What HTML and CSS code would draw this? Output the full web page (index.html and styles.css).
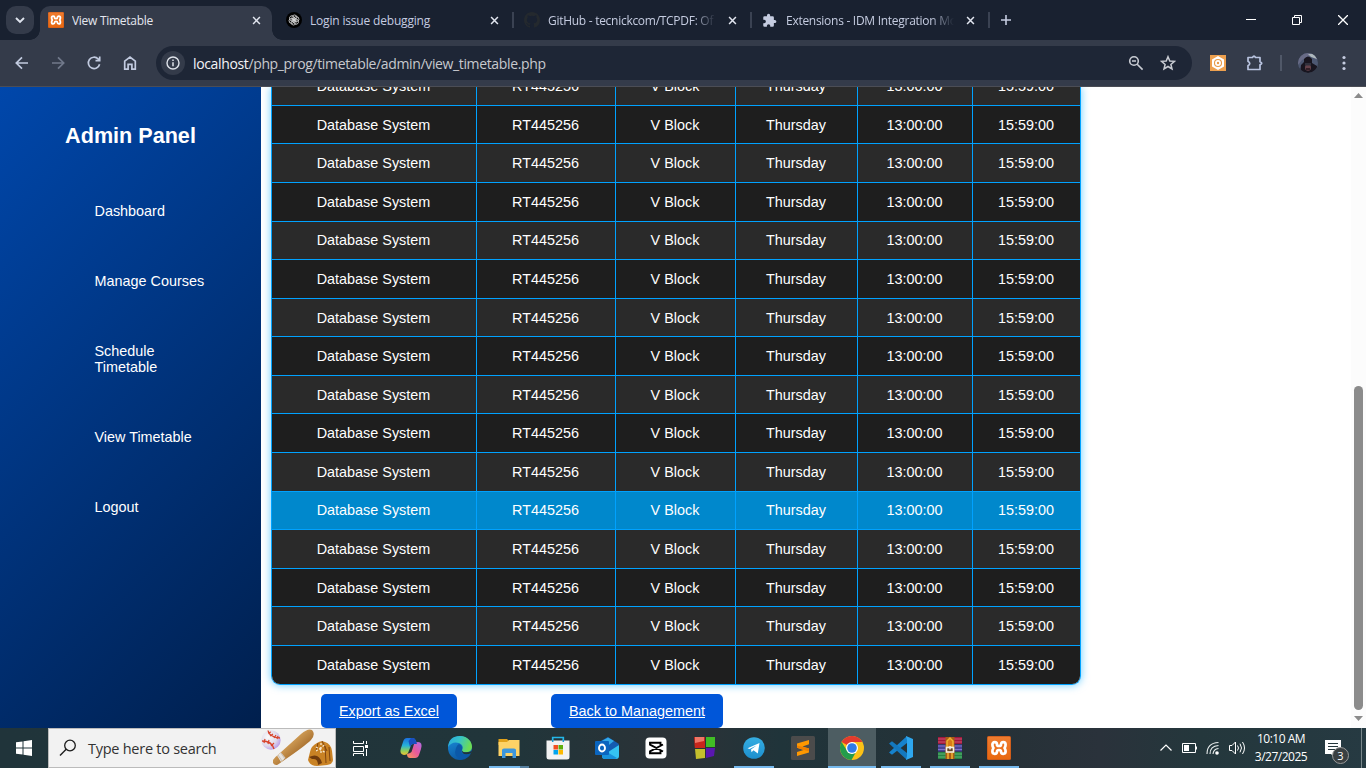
FILE: index.html
```
<!DOCTYPE html>
<html lang="en">
<head>
<meta charset="utf-8">
<title>View Timetable</title>
<link rel="stylesheet" href="styles.css">
</head>
<body>
<svg class="defs" width="0" height="0">
  <defs>
    <linearGradient id="orange" x1="0" y1="0" x2="0" y2="1"><stop offset="0" stop-color="#ee7c30"/><stop offset="1" stop-color="#e9680f"/></linearGradient>
    <linearGradient id="edgeA" x1="0" y1="0" x2="1" y2="0.3"><stop offset="0" stop-color="#2aa9e0"/><stop offset=".5" stop-color="#36c3c8"/><stop offset="1" stop-color="#6bdc55"/></linearGradient>
    <linearGradient id="edgeB" x1="0" y1="0" x2="0.4" y2="1"><stop offset="0" stop-color="#1b8fdd"/><stop offset="1" stop-color="#0c59a4"/></linearGradient>
    <linearGradient id="copA" x1="0" y1="0" x2="0" y2="1"><stop offset="0" stop-color="#1b6fe0"/><stop offset=".45" stop-color="#27b2d8"/><stop offset=".75" stop-color="#8ccf5c"/><stop offset="1" stop-color="#f4c331"/></linearGradient>
    <linearGradient id="copB" x1="1" y1="0" x2="0" y2="1"><stop offset="0" stop-color="#b26be8"/><stop offset=".5" stop-color="#e8599b"/><stop offset="1" stop-color="#fb9a55"/></linearGradient>
    <linearGradient id="bat" x1="0" y1="0" x2="1" y2="1"><stop offset=".3" stop-color="#dcaa62"/><stop offset=".65" stop-color="#a8702f"/></linearGradient>
    <radialGradient id="ball" cx=".35" cy=".35" r=".75"><stop offset="0" stop-color="#fafafa"/><stop offset=".6" stop-color="#ded9ea"/><stop offset="1" stop-color="#b291ea"/></radialGradient>
    <linearGradient id="tele" x1="0" y1="0" x2="0" y2="1"><stop offset="0" stop-color="#35aee2"/><stop offset="1" stop-color="#1d8fce"/></linearGradient>
    <symbol id="xampp" viewBox="0 0 24 24"><rect width="24" height="24" rx="1.500" fill="#c9591b"/><rect x=".8" y=".8" width="22.400" height="22.400" rx="1" fill="url(#orange)"/><path d="M10 9.800V8.500Q10 6.200 7.700 6.200T5.400 8.700Q5.400 10.500 6.500 12Q5.400 13.500 5.400 15.300Q5.400 17.800 7.700 17.800T10 15.500Q10 14 12 14T14 15.500Q14 17.800 16.300 17.800T18.600 15.300Q18.600 13.500 17.500 12Q18.600 10.500 18.600 8.700Q18.600 6.200 16.300 6.200T14 8.500Q14 10 12 10T10 8.500" fill="none" stroke="#fff" stroke-width="2.700" stroke-linejoin="round"/></symbol>
    <symbol id="x" viewBox="0 0 10 10"><path d="M1.200 1.200 8.800 8.800M8.800 1.200 1.200 8.800" stroke="currentColor" stroke-width="1.700"/></symbol>
    <symbol id="puzzle" viewBox="0 0 24 24"><path d="M20.500 11H19V7a2 2 0 0 0-2-2h-4V3.500a2.500 2.500 0 0 0-5 0V5H4a2 2 0 0 0-2 2v3.800h1.500a2.700 2.700 0 0 1 0 5.400H2V20a2 2 0 0 0 2 2h3.800v-1.500a2.700 2.700 0 0 1 5.400 0V22H17a2 2 0 0 0 2-2v-4h1.500a2.500 2.500 0 0 0 0-5z" fill="currentColor"/></symbol>
  </defs>
</svg>
<div class="screen">
  <header class="tabstrip">
    <div class="tab-search"><svg width="10" height="7" viewBox="0 0 10 7"><path d="M1 1 5 5 9 1" fill="none" stroke="#dfe4ee" stroke-width="1.900"/></svg></div>
    <div class="tab active">
      <svg class="fav"><use href="#xampp"/></svg><span class="name">View Timetable</span><svg class="close"><use href="#x"/></svg>
    </div>
    <div class="tab">
      <svg class="fav" viewBox="0 0 16 16"><circle cx="8" cy="8" r="8" fill="#000"/><g fill="none" stroke="#d8d8d8" stroke-width=".8"><path id="petal" d="M6 4.500Q8 1.700 10.300 3.600Q11.200 4.500 10.800 6.200L8 8 6 9.100Z"/><use href="#petal" transform="rotate(60 8 8)"/><use href="#petal" transform="rotate(120 8 8)"/><use href="#petal" transform="rotate(180 8 8)"/><use href="#petal" transform="rotate(240 8 8)"/><use href="#petal" transform="rotate(300 8 8)"/></g></svg><span class="name t2">Login issue debugging</span><svg class="close"><use href="#x"/></svg><i class="sep"></i>
    </div>
    <div class="tab">
      <svg class="fav" viewBox="0 0 16 16"><path fill="#24292e" d="M8 0C3.580 0 0 3.580 0 8c0 3.540 2.290 6.530 5.470 7.590.4.070.55-.17.55-.38v-1.490c-2.230.49-2.690-.94-2.690-.94-.36-.93-.89-1.170-.89-1.170-.73-.5.050-.49.050-.49.8.060 1.230.83 1.230.83.720 1.210 1.870.87 2.330.66.070-.52.280-.87.510-1.070-1.780-.2-3.640-.89-3.640-3.950 0-.87.310-1.590.82-2.150-.08-.2-.36-1.020.08-2.120 0 0 .67-.21 2.200.82a7.600 7.600 0 0 1 4 0c1.530-1.040 2.200-.82 2.200-.82.440 1.100.160 1.920.080 2.120.510.560.820 1.270.820 2.150 0 3.070-1.870 3.750-3.650 3.950.290.250.540.730.540 1.480v2.190c0 .210.150.460.550.380A8 8 0 0 0 16 8c0-4.420-3.580-8-8-8z"/></svg><span class="name fade t3">GitHub - tecnickcom/TCPDF: Of</span><svg class="close"><use href="#x"/></svg><i class="sep"></i>
    </div>
    <div class="tab">
      <svg class="fav puz"><use href="#puzzle"/></svg><span class="name fade t4">Extensions - IDM Integration Mo</span><svg class="close"><use href="#x"/></svg><i class="sep"></i>
    </div>
    <svg class="plus" width="12" height="12" viewBox="0 0 12 12"><path d="M6 1V11M1 6H11" stroke="#c5cce0" stroke-width="1.600"/></svg>
    <div class="winbtns">
      <svg width="10" height="10"><path d="M0 4.500H10" stroke="#fff"/></svg>
      <svg width="10" height="10"><path d="M.5 2.500H7.500V9.500H.5ZM2.500 2.500V.5H9.500V7.500H7.500" fill="none" stroke="#fff"/></svg>
      <svg width="10" height="10"><path d="M0 0 10 10M10 0 0 10" stroke="#fff" stroke-width="1.300"/></svg>
    </div>
  </header>
  <nav class="toolbar">
    <div class="navicons">
      <svg viewBox="0 0 16 16"><path d="M14 8H2.500M8 2.300 2.300 8 8 13.700" /></svg>
      <svg class="dim" viewBox="0 0 16 16"><path d="M2 8H13.500M8 2.300 13.700 8 8 13.700"/></svg>
      <svg viewBox="0 0 16 16"><path d="M13.600 9.300A5.700 5.700 0 1 1 12.200 4L13.500 5.400M13.700 1.500V5.600H9.500"/></svg>
      <svg viewBox="0 0 16 16"><path d="M2.700 6.200 8 2 13.300 6.200V14.200H9.900V9.300H6.100V14.200H2.700Z"/></svg>
    </div>
    <div class="omnibox">
      <span class="info"><svg width="14" height="14" viewBox="0 0 14 14"><circle cx="7" cy="7" r="6" fill="none" stroke="#dfe3ea" stroke-width="1.400"/><path d="M7 6.200V10.300M7 3.500V5" stroke="#dfe3ea" stroke-width="1.500"/></svg></span>
      <span class="url"><b>localhost</b>/php_prog/timetable/admin/view_timetable.php</span>
      <svg width="16" height="16" viewBox="0 0 16 16"><g fill="none" stroke="#c9ccd3" stroke-width="1.600"><circle cx="6" cy="6" r="4.300"/><path d="M9.200 9.200 14.600 14.600M4 6H8"/></g></svg>
      <svg width="16" height="16" viewBox="0 0 16 16"><path d="M8 1.700 9.800 6 14.500 6.300 10.900 9.400 12 14 8 11.500 4 14 5.100 9.400 1.500 6.300 6.200 6Z" fill="none" stroke="#c9ccd3" stroke-width="1.500"/></svg>
    </div>
    <svg class="idm" width="16" height="16" viewBox="0 0 16 16"><rect width="16" height="16" fill="#eda04f"/><path d="M8 1 14 4.500V11.500L8 15 2 11.500V4.500Z" fill="#fff"/><circle cx="8" cy="8" r="3.500" fill="none" stroke="#e89a48" stroke-width="1.100"/><circle cx="8" cy="8" r="1.200" fill="#e89a48"/></svg>
    <svg class="ext" width="18" height="18" viewBox="0 0 18 18"><path d="M2 3.500H6.500Q8 .8 9.500 3.500H14V7.800Q17.500 9.200 14 10.800V15.500H2V11.800Q5.500 9.500 2 7.200Z" fill="none" stroke="#b9c4e0" stroke-width="1.700" stroke-linejoin="round"/></svg>
    <i class="tdiv"></i>
    <svg class="avatar" width="20" height="20" viewBox="0 0 20 20"><defs><clipPath id="round"><circle cx="10" cy="10" r="10"/></clipPath></defs><g clip-path="url(#round)"><rect width="20" height="20" fill="#4d5872"/><path d="M0 0H20V7L12 3 4 7 0 12Z" fill="#686b86"/><path d="M10 1H16L19 6 13 4Z" fill="#aeb8bc"/><path d="M2 20 3 12 6 9V6Q10 1 14 6V10L19 13V20Z" fill="#18151f"/><ellipse cx="10" cy="14.500" rx="3" ry="3.200" fill="#65424b"/><path d="M7 10H13V12.500H7Z" fill="#30303c"/><path d="M8 16H12" stroke="#20151b" stroke-width="1.300"/></g></svg>
    <svg class="kebab" width="4" height="16"><g fill="#c5cce0"><circle cx="2" cy="2.500" r="1.600"/><circle cx="2" cy="8" r="1.600"/><circle cx="2" cy="13.500" r="1.600"/></g></svg>
  </nav>
  <div class="page">
    <aside class="sidebar">
      <h2>Admin Panel</h2>
      <ul>
        <li>Dashboard</li><li>Manage Courses</li><li>Schedule<br>Timetable</li><li>View Timetable</li><li>Logout</li>
      </ul>
    </aside>
    <main class="content">
      <div class="table" id="timetable"></div>
      <div class="actions"><a class="btn export">Export as Excel</a><a class="btn back">Back to Management</a></div>
    </main>
    <div class="scrollbar">
      <svg width="9" height="5"><path d="M0 5 4.500 0 9 5Z" fill="#8b8b8b"/></svg>
      <i class="thumb"></i>
      <svg width="9" height="5"><path d="M0 0 4.500 5 9 0Z" fill="#8b8b8b"/></svg>
    </div>
  </div>
  <footer class="taskbar">
    <div class="start"><svg width="16" height="16" viewBox="0 0 16 16"><path d="M0 2.300 6.500 1.400V7.500H0ZM7.500 1.200 16 0V7.500H7.500ZM0 8.500H6.500V14.600L0 13.700ZM7.500 8.500H16V16L7.500 14.800Z" fill="#fff"/></svg></div>
    <div class="search">
      <svg width="18" height="18" viewBox="0 0 18 18"><circle cx="11" cy="6.500" r="5.300" fill="none" stroke="#1c1c1c" stroke-width="1.300"/><path d="M7.200 10.300 1 16.500" stroke="#1c1c1c" stroke-width="1.400"/></svg>
      <span>Type here to search</span>
      <svg class="sport" width="74" height="38" viewBox="0 0 74 38"><circle cx="10" cy="11" r="9.700" fill="url(#ball)"/><path d="M7 1.500Q8 8 19 9M1 12Q11 12 13 20" fill="none" stroke="#d8432b" stroke-width="1.300"/><path d="M7 4 10 3M9 7 12 5M13 9 15 6M16 10 17 7M3 14 4 10M7 15 8 11M10 17 13 14" stroke="#d8432b" stroke-width="1.200"/><path d="M12 31Q14 28 19 24L40 5Q47-1 51 1Q55 5 50 11Q44 17 22 32L17 35.500Q14 37 12 34Z" fill="url(#bat)"/><path d="M16 26.500 20 23.500 24.500 29 20 33Z" fill="#e8e3dc"/><path d="M17 26 21 32M20 24 24 30" stroke="#aaa39c" stroke-width=".6"/><path d="M47 31 49 23Q50 17 56 14Q60 11 64 13Q70 15 71 22L72 31Q72 35 66 36L56 37Q49 37 47 31Z" fill="#c98224"/><path d="M48 28Q58 23 61 34L57 36Q57 29 51 30Z" fill="#713b0c"/><path d="M64 17 65 34M68 18 69 32M57 14 55 22M61 12 66 22" stroke="#80450f" stroke-width="1" fill="none"/><path d="M55 22 65 15M55 18 65 24M60 14V25" stroke="#f8ead2" stroke-width="1.300" stroke-dasharray="2 2"/></svg>
    </div>
    <div class="app view"><svg width="17" height="17" viewBox="0 0 17 17"><path d="M1.500 1V3.500H11.500V1M1.500 16V13.500H11.500V16M1.500 6.500H11.500V11.500H1.500ZM14.500 1V4M14.500 9V16" fill="none" stroke="#fff"/><rect x="13" y="5" width="3" height="3" fill="#fff"/></svg></div>
    <div class="app"><svg viewBox="0 0 24 24"><path d="M8 2H14Q16 2 17 5L18 8H14Q12 8 11 12L9 17Q8 19 5 19Q0 18 2 12L4 6Q5 2 8 2Z" fill="url(#copA)"/><path d="M16 22H11Q8 22 8 18L11 17Q13 16 13.500 13L15 8Q16 6 19 6Q24 6 22 13L20 19Q19 22 16 22Z" fill="url(#copB)"/><path d="M12 2H14Q16 2 17 5L18 8H14Q12 8 11 11L9.500 5Z" fill="#194fc0"/></svg></div>
    <div class="app"><svg viewBox="0 0 24 24"><circle cx="12" cy="12" r="12" fill="url(#edgeB)"/><path d="M0 11Q1 0 12 0C20 0 24 6 24 11C24 16 18 17 15 16Q13 15 14.300 13.500Q16 9 11 7Q4 5 0 11Z" fill="url(#edgeA)"/><path d="M14 13.500Q12 18 17 19Q20 20 22.500 18Q19 24 12 23Q5 20 8 12Q9 9 11 8Q15 10 14 13.500Z" fill="#0b58a8"/><path d="M14 14.500Q14 18 18 18.300Q21 18.300 23 17L24 15Q20 17 15.500 16Z" fill="#21343a"/></svg></div>
    <div class="app run multi"><svg viewBox="0 0 24 24"><path d="M1.500 3H10L12 5V9H1.500Z" fill="#e2a21a"/><path d="M1.500 6H10L12 4H22.500V20H1.500Z" fill="#fdd266"/><path d="M5 22V14Q5 12.500 7 12.500H17Q19 12.500 19 14V22H15.500V17H8.500V22Z" fill="#3c96dc"/></svg></div>
    <div class="app"><svg viewBox="0 0 24 24"><path d="M6.700 6V1.500H17.300V6" fill="none" stroke="#24b6e8" stroke-width="1.700"/><path d="M.5 4.500H23.500V21Q23.500 23.500 21 23.500H3Q.5 23.500 .5 21Z" fill="#f2f2f2"/><path d="M6.700 4V6M17.300 4V6" fill="none" stroke="#1697ce" stroke-width="1.500"/><path d="M7.500 9H12V13.500H7.500Z" fill="#f25022"/><path d="M12.500 9H17V13.500H12.500Z" fill="#5fae0a"/><path d="M7.500 14H12V18.500H7.500Z" fill="#00a4ef"/><path d="M12.500 14H17V18.500H12.500Z" fill="#fdb900"/></svg></div>
    <div class="app"><svg viewBox="0 0 24 24"><path d="M2 7 13 1 24 8 20 18H5Z" fill="#145cb1"/><path d="M5 6 13 1.500 19 5 10 12Z" fill="#32a9e8"/><path d="M24 9V20Q24 23 21 23H10Q7 23 7 20Z" fill="#35c4f1"/><path d="M7 13 22 22Q21 23 19 23H10Q7 23 7 20Z" fill="#1892dc"/><rect y="5" width="14" height="14" rx="1" fill="#0b65bf"/><ellipse cx="7" cy="12" rx="3" ry="3.500" fill="none" stroke="#fff" stroke-width="1.900"/></svg></div>
    <div class="app"><svg viewBox="0 0 24 24"><rect x="1.500" y="1.500" width="21" height="21" rx="4" fill="#fff"/><path d="M19 8.500 6 15.300V17.200H16.500V15M19 15.500 6 8.700V6.800H16.500V9" fill="none" stroke="#000" stroke-width="1.900"/></svg></div>
    <div class="app"><svg viewBox="0 0 24 24"><path d="M1 1H12V12H1.800Z" fill="#c9261b"/><path d="M2 1H11V5L2 7Z" fill="#ef7767"/><path d="M13 1H22V11H13Z" fill="#41bd25"/><path d="M2 13H12V22L3 23Z" fill="#c5bf2d"/><path d="M13 12H22L21 20 13 22Z" fill="#5a17b0"/></svg></div>
    <div class="app run"><svg viewBox="0 0 24 24"><circle cx="12" cy="12" r="10.800" fill="url(#tele)"/><path d="M5.500 12.300 17.500 7 15.800 17.500 11.500 14.200 9.500 16.200 9 13.400 14.500 9.500 7.500 13Z" fill="#fff"/></svg></div>
    <div class="app"><svg viewBox="0 0 24 24"><rect width="24" height="24" rx="1.500" fill="#4b4b4b"/><path d="M18 4V8.300L11.500 10.400 18 12.500V16.500L6 20V16L12.500 13.900 6 11.800V7.600Z" fill="#ff9800"/><path d="M6 9.500V11.800L18 15.500V12.500Z" fill="#f08000"/></svg></div>
    <div class="app run current"><svg viewBox="0 0 24 24"><circle cx="12" cy="12" r="12" fill="#fbc116"/><path d="M1.600 6A12 12 0 0 1 22.400 6H12L7 9Z" fill="#e33b2e"/><path d="M1.600 6 7.200 15 12 18 16.500 15 11.500 24A12 12 0 0 1 1.600 6Z" fill="#249c4b"/><circle cx="12" cy="12" r="6" fill="#fff"/><circle cx="12" cy="12" r="4.800" fill="#307be8"/></svg></div>
    <div class="app run"><svg viewBox="0 0 24 24"><path d="M0 16.500 18 0V7L3 18.800Z" fill="#1682cd"/><path d="M0 7.500 3 5.200 18 17V24Z" fill="#1478be"/><path d="M17 0 24 3V21L17 24 18 20V4Z" fill="#2ea7ef"/></svg></div>
    <div class="app run"><svg viewBox="0 0 24 24"><path d="M0 1H24V8H0Z" fill="#9f183c"/><path d="M0 8.500H24V15.500H0Z" fill="#494396"/><path d="M0 16H24V23H0Z" fill="#258244"/><path d="M0 3H24M0 6H24" stroke="#dc6680" stroke-width=".8"/><path d="M0 10H24M0 13.500H24" stroke="#8d83d8" stroke-width=".8"/><path d="M0 18H24M0 21H24" stroke="#6fc486" stroke-width=".8"/><rect x="7.500" y="1" width="9" height="22" fill="#a95c15"/><path d="M9 5V11H15V5L12 2ZM10 17V23M14 17V23" fill="#d87b17" stroke="#efb232" stroke-width="1.500"/><rect x="8.500" y="11.500" width="7" height="4.500" fill="#684421" stroke="#f6f0df" stroke-width="1.600"/><path d="M12 10V13.500" stroke="#eee" stroke-width="1.500"/></svg></div>
    <div class="app run"><svg><use href="#xampp"/></svg></div>
    <div class="tray">
      <svg width="14" height="14" viewBox="0 0 14 14"><path d="M1.500 9.500 7 4 12.500 9.500" fill="none" stroke="#fff" stroke-width="1.200"/></svg>
      <svg width="15" height="10" viewBox="0 0 15 10"><path d="M.5.5H13.500V9.500H.5ZM14.500 3.500V6.500" fill="none" stroke="#fff"/><rect x="2" y="2" width="5" height="6" fill="#fff"/></svg>
      <svg width="14" height="14" viewBox="0 0 14 14"><g fill="none" stroke="#e8eded" stroke-width="1.100"><path d="M1 13Q1 2 12.500 1.500M4 13Q4 5 12.500 4.500M7 13Q7.500 8 12.500 7.500"/></g><circle cx="11" cy="12" r="1.800" fill="#fff"/></svg>
      <svg width="17" height="14" viewBox="0 0 17 14"><path d="M.5 4.500H3L6.500 1V13L3 9.500H.5ZM8.500 4.500Q10.500 7 8.500 9.500M11 2.700Q14 7 11 11.300M13.500 1Q17.500 7 13.500 13" fill="none" stroke="#fff"/></svg>
    </div>
    <div class="clock"><span>10:10 AM</span><span>3/27/2025</span></div>
    <div class="notif"><svg width="25" height="25" viewBox="0 0 25 25"><path d="M0 0H16V14H9V17L6 14H0Z" fill="#fff"/><path d="M3 3.500H13M3 6.500H13M3 9.500H10" stroke="#26373c"/><circle cx="15.500" cy="15.500" r="8" fill="#3a4042" stroke="#999"/><text x="15.500" y="19.500">3</text></svg></div>
    <i class="desktop-edge"></i>
  </footer>
</div>
<script src="table.js"></script>
</body>
</html>
```
FILE: table.js
```
const entry = ["Database System", "RT445256", "V Block", "Thursday", "13:00:00", "15:59:00"];
const heights = [38, 38, 39, 39, 38, 39, 38, 39, 38, 39, 39, 38, 39, 38, 39, 39];
const raised = [0, 4, 11];
const hovered = 11;
const table = document.getElementById("timetable");
heights.forEach((height, i) => {
  const row = document.createElement("div");
  row.className = "row" + (i === hovered ? " hovered" : "") + (raised.includes(i) ? " raised" : "");
  row.style.height = height + "px";
  entry.forEach((text) => {
    const cell = document.createElement("span");
    cell.textContent = text;
    row.appendChild(cell);
  });
  table.appendChild(row);
});
```
FILE: styles.css
```
* { box-sizing: border-box; }
body { margin: 0; overflow: hidden; font-family: "Liberation Sans", Arial, sans-serif; }
svg { display: block; flex: none; }
.defs { position: absolute; }
.screen { width: 1366px; height: 768px; display: flex; flex-direction: column; background: #fff; }

.tabstrip { height: 40px; flex: none; background: #192130; display: flex; align-items: flex-start; font-family: "Open Sans", sans-serif; font-size: 12px; color: #c5cce0; }
.tab-search { width: 28px; height: 28px; margin: 6px 6px 0; border-radius: 10px; background: #343b4a; display: grid; place-items: center; }
.tab { position: relative; width: 238px; height: 40px; display: flex; align-items: center; padding-left: 8px; flex: none; }
.tab.active { color: #e4e7ef; }
.tab.active::before { content: ""; position: absolute; left: 0; top: 6px; width: 232px; height: 34px; background: #343b4a; border-radius: 10px 10px 0 0; }
.tab.active::after { content: ""; position: absolute; left: -10px; bottom: 0; width: 252px; height: 10px; background: radial-gradient(circle at 0 0, transparent 9.500px, #343b4a 10px) left / 10px 10px no-repeat, radial-gradient(circle at 100% 0, transparent 9.500px, #343b4a 10px) right / 10px 10px no-repeat; }
.fav { width: 16px; height: 16px; margin-right: 8px; position: relative; z-index: 1; }
.puz { width: 15px; height: 15px; margin-right: 9px; }
.name { width: 168px; white-space: nowrap; overflow: hidden; line-height: 20px; padding-top: 1px; position: relative; z-index: 1; letter-spacing: -.28px; }
.t2 { letter-spacing: -.18px; }
.fade { mask-image: linear-gradient(90deg, #000 86%, transparent); }
.close { width: 9px; height: 9px; margin-left: 12px; position: relative; z-index: 1; color: #e1e5ef; }
.sep { position: absolute; left: 234px; top: 12px; width: 2px; height: 16px; background: #3a4252; }
.plus { margin: 14px 0 0 8px; }
.winbtns { margin: 15px 18px 0 auto; display: flex; gap: 36px; }

.toolbar { height: 47px; flex: none; background: #343b4a; border-bottom: 1px solid #4b4d55; display: flex; align-items: center; padding-left: 14px; }
.navicons { display: flex; gap: 20px; }
.navicons svg { width: 16px; height: 16px; fill: none; stroke: #c2cbe0; stroke-width: 1.700; }
.navicons .dim { stroke: #71798b; }
.omnibox { width: 1036px; height: 34px; margin-left: 18px; border-radius: 17px; background: #1e2636; display: flex; align-items: center; padding: 0 16px 0 5px; gap: 16px; }
.info { width: 24px; height: 24px; border-radius: 50%; background: #343b4a; display: grid; place-items: center; }
.url { flex: 1; margin-left: -8px; font: 14px "Open Sans", sans-serif; color: #c7c9ce; letter-spacing: -.36px; white-space: nowrap; }
.url b { font-weight: 400; color: #f3f4f6; }
.idm { margin-left: 18px; }
.ext { margin-left: 20px; }
.tdiv { width: 2px; height: 16px; margin-left: 16px; background: #505868; }
.avatar { margin-left: 16px; }
.kebab { margin-left: 24px; }

.page { height: 641px; flex: none; display: flex; overflow: hidden; }
.sidebar { width: 261px; color: #fff; background: linear-gradient(135deg, #0047ab, #001f4d); }
.sidebar h2 { margin: 36px 0 0; font-size: 21.600px; line-height: 25px; text-align: center; }
.sidebar ul { list-style: none; margin: 55px 0 0; padding: 0 0 0 94.500px; display: flex; flex-direction: column; gap: 54px; }
.sidebar li { font-size: 14.400px; line-height: 16px; }
.content { flex: 1; padding-left: 10px; min-width: 0; }
.table { width: 810px; height: 598px; display: flex; flex-direction: column; justify-content: flex-end; overflow: hidden; border: solid #00a2ff; border-width: 0 1px 1px; border-radius: 0 0 9px 9px; box-shadow: 0 0 9px rgba(0, 170, 255, .6); }
.row { flex: none; display: grid; grid-template-columns: 205px 139px 120px 122px 115px 107px; background: #2a2a2a; border-top: 1px solid #00a2ff; color: #fff; font-size: 14.400px; line-height: 18px; }
.row:nth-child(even) { background: #1e1e1e; }
.row.hovered { background: #0088cc; }
.row span { text-align: center; border-right: 1px solid #00a2ff; padding: 10px 1px 0 0; }
.row.raised span { padding-top: 9px; }
.row span:last-child { border-right: 0; }
.actions { display: flex; gap: 94px; margin: 9px 0 0 50px; }
.btn { height: 34px; border-radius: 5px; background: #0056d9; color: #fff; font-size: 14.400px; line-height: 34px; text-align: center; text-decoration: underline; }
.export { width: 136px; }
.back { width: 172px; }
.scrollbar { width: 15px; background: #fcfcfc; display: flex; flex-direction: column; align-items: center; padding: 6px 0 7px; }
.thumb { width: 9px; height: 324px; margin: auto 0 6px; border-radius: 5px; background: #8b8b8b; }

.taskbar { height: 40px; flex: none; display: flex; background: linear-gradient(90deg, #20343a 0, #21353a 520px, #2c3237 680px, #20343a 780px, #263137 1000px, #2a323b 1100px, #24373c 1200px, #263a42); }
.start { width: 48px; display: grid; place-items: center; }
.search { width: 288px; background: #f2f2f2; border: 1px solid #bbb; display: flex; align-items: center; padding-left: 10px; font: 14.500px "Open Sans", sans-serif; color: #333; }
.search span { margin-left: 11px; width: 173px; letter-spacing: -.26px; white-space: nowrap; }
.app { width: 48px; margin-right: 1px; position: relative; display: grid; place-items: center; flex: none; }
.app svg { width: 24px; height: 24px; }
.view { margin-right: 3px; }
.view svg { width: 17px; height: 17px; }
.run::after { content: ""; position: absolute; left: 4px; bottom: 0; width: 40px; height: 2px; background: #76b9ed; }
.multi::after { background: linear-gradient(90deg, #76b9ed 31px, #557f9f 31px); }
.current { background: #4d5d62; }
.current::after { left: 0; width: 48px; }
.tray { display: flex; align-items: center; margin-left: auto; gap: 9px; }
.clock { width: 66px; margin-left: 2px; padding-top: 2px; display: flex; flex-direction: column; align-items: center; color: #fff; font: 12px/18px "Open Sans", sans-serif; letter-spacing: -.5px; white-space: nowrap; }
.notif { width: 47px; padding: 12px 0 0 11px; }
.notif text { fill: #fff; font: 11px "Open Sans", sans-serif; text-anchor: middle; }
.desktop-edge { width: 5px; border-left: 1px solid #79878b; }
```
